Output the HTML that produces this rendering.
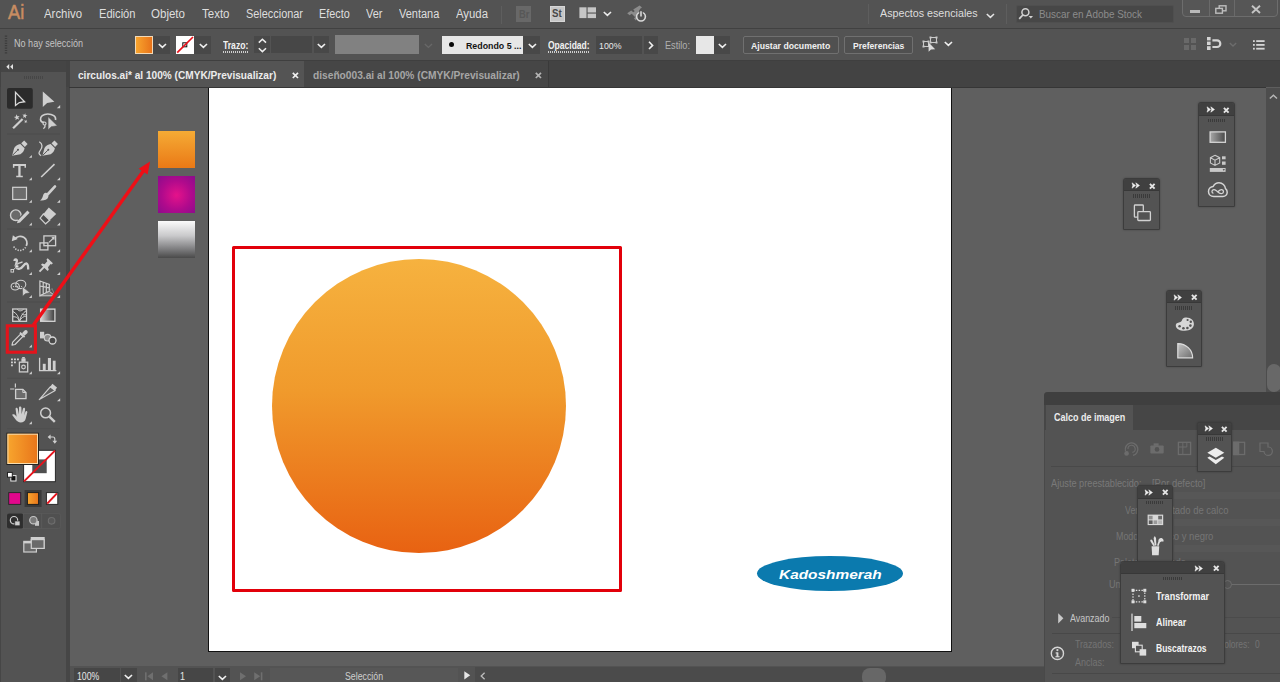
<!DOCTYPE html>
<html>
<head>
<meta charset="utf-8">
<title>circulos.ai</title>
<style>
*{box-sizing:border-box;margin:0;padding:0}
html,body{width:1280px;height:682px;overflow:hidden;background:#5e5e5e;font-family:"Liberation Sans",sans-serif;}
#app{position:relative;width:1280px;height:682px;overflow:hidden;background:#5e5e5e}
.a{position:absolute}
.t{position:absolute;white-space:nowrap;line-height:1;color:#dcdcdc;transform-origin:0 50%}
svg{position:absolute;overflow:visible}
.mp{position:absolute;background:#535353;border:1px solid #3c3c3c;border-radius:3px 3px 1px 1px;box-shadow:0 0 2px rgba(0,0,0,.3)}
.mph{position:absolute;left:0;top:0;right:0;background:#404040;border-radius:2px 2px 0 0;border-bottom:1px solid #383838}
.grip{position:absolute;height:3.2px;background:repeating-linear-gradient(90deg,#3a3a3a 0 1px,transparent 1px 2px)}
/* bars */
#menubar{left:0;top:0;width:1280px;height:28px;background:#535353}
#menuline{left:0;top:28px;width:1280px;height:1px;background:#414141}
#ctrlbar{left:0;top:29px;width:1280px;height:31px;background:#535353}
#ctrlline{left:0;top:60px;width:1280px;height:1px;background:#3f3f3f}
#tabstrip{left:0;top:61px;width:1280px;height:26px;background:#434343}
#tabline{left:69px;top:87px;width:1197px;height:1px;background:#363636}
#tab1{left:70px;top:61px;width:234px;height:26px;background:#545454}
#tab2{left:304px;top:61px;width:245px;height:26px;background:#464646;border-right:1px solid #3a3a3a}
/* left */
#leftcol{left:0;top:61px;width:70px;height:621px;background:#464646}
#toolhead{left:1px;top:61px;width:65.3px;height:11px;background:#454545}
#toolbody{left:1px;top:72px;width:65.3px;height:610px;background:#535353}
/* canvas */
#canvas{left:70px;top:88px;width:1196px;height:578px;background:#5f5f5f}
#artboard{left:208px;top:87px;width:744px;height:565px;background:#fff;border:1px solid #111}
#vscroll{left:1265.5px;top:88px;width:14.5px;height:578px;background:#4d4d4d}
#status{left:70px;top:666px;width:1210px;height:16px;background:#535353}
</style>
</head>
<body>
<div id="app">
  <!-- canvas area -->
  <div class="a" id="canvas"></div>
  <div class="a" id="artboard"></div>

  <!-- artwork -->
  <div class="a" style="left:158px;top:131px;width:37px;height:37px;background:linear-gradient(#f5ab35,#ea7916)"></div>
  <div class="a" style="left:158px;top:176px;width:37px;height:37px;background:radial-gradient(circle at 50% 52%,#e5128a 0%,#b00a8c 55%,#8a0c8c 100%)"></div>
  <div class="a" style="left:158px;top:221px;width:37px;height:37px;background:linear-gradient(#fbfbfb 0%,#c9c9cb 40%,#7f7f81 75%,#4a4a4a 100%)"></div>
  <div class="a" style="left:271.9px;top:259px;width:293.8px;height:293.8px;border-radius:50%;background:linear-gradient(#f6b23f 0%,#f09a2c 45%,#e86212 100%)"></div>
  <div class="a" style="left:232.3px;top:245.8px;width:389.8px;height:346.1px;border:3px solid #e2000a;border-radius:1.5px"></div>
  <svg class="a" style="left:757px;top:556.1px" width="146" height="35" viewBox="0 0 146 35"><ellipse cx="73" cy="17.5" rx="73" ry="17.5" fill="#0b7aae"/></svg>

  <!-- bars -->
  <div class="a" id="status"></div>
  <div class="a" id="vscroll"></div>
  <div class="a" id="leftcol"></div>
  <div class="a" id="menubar"></div>
  <div class="a" id="menuline"></div>
  <div class="a" id="ctrlbar"></div>
  <div class="a" id="ctrlline"></div>
  <div class="a" id="tabstrip"></div>
  <div class="a" id="tabline"></div>
  <div class="a" id="tab2"></div>
  <div class="a" id="tab1"></div>
  <div class="a" id="toolhead"></div>
  <div class="a" id="toolbody"></div>


  <!-- ===== menu bar widgets ===== -->
  <div class="t" style="left:7.6px;top:3.4px;font-size:19.6px;color:#c98d62;transform:scaleX(.93);-webkit-text-stroke:.5px #c98d62">Ai</div>
  <div class="a" style="left:500.5px;top:6px;width:1px;height:18px;background:#5e5e5e"></div>
  <div class="a" style="left:516px;top:6px;width:15px;height:16px;background:#686868"></div>
  <div class="t" style="left:519px;top:8.5px;font-size:11px;font-weight:bold;color:#575757;transform:scaleX(.85)">Br</div>
  <div class="a" style="left:549.5px;top:6px;width:15.5px;height:16px;background:#c6c6c6;border:1px solid #d6d6d6"></div>
  <div class="t" style="left:552.3px;top:8.3px;font-size:11.5px;font-weight:bold;color:#484848;transform:scaleX(.84)">St</div>
  <svg style="left:579px;top:7px" width="18" height="12" viewBox="0 0 18 12"><rect x=".4" y=".3" width="7.1" height="10.8" fill="#c6c6c6"/><rect x="8.6" y=".3" width="8.4" height="5.2" fill="#c6c6c6"/><rect x="8.6" y="6.6" width="8.4" height="4.5" fill="#c6c6c6"/></svg>
  <svg style="left:603px;top:10.5px" width="9" height="6" viewBox="0 0 9 6"><path d="M.8 1 L4.4 4.4 L8 1" fill="none" stroke="#ececec" stroke-width="1.6"/></svg>
  <!-- rocket / gpu icon -->
  <svg style="left:625px;top:4px" width="24" height="20" viewBox="0 0 24 20">
    <path d="M2.2 9.2 L6.2 6.4 L8.6 8.4 L4.6 11.2 Z M8.2 5.6 L14.6 1.6 L17 3.6 L10.6 8 Z M9 14.6 L11 12.2 L12.8 13.4 L10.8 16.6 Z" fill="#8c8c8c"/>
    <path d="M6.5 9.5 L15.5 3 L13.5 9.5 L10 13 Z" fill="#8c8c8c"/>
    <circle cx="16" cy="12.6" r="4.4" fill="#535353" stroke="#d9d9d9" stroke-width="1.6"/>
    <rect x="14.2" y="6" width="3.6" height="5" fill="#535353"/>
    <line x1="16" y1="7.2" x2="16" y2="12.4" stroke="#d9d9d9" stroke-width="1.6"/>
  </svg>
  <div class="a" style="left:868px;top:4px;width:1px;height:20px;background:#5e5e5e"></div>
  <svg style="left:985.5px;top:12.5px" width="9" height="6" viewBox="0 0 9 6"><path d="M.8 1 L4.4 4.4 L8 1" fill="none" stroke="#e4e4e4" stroke-width="1.5"/></svg>
  <div class="a" style="left:1006px;top:4px;width:1px;height:20px;background:#5e5e5e"></div>
  <div class="a" style="left:1016px;top:5px;width:157.5px;height:18px;background:#474747;border:1px solid #4f4f4f;border-radius:2px"></div>
  <svg style="left:1018px;top:7px" width="16" height="14" viewBox="0 0 16 14"><circle cx="7.4" cy="5.2" r="3.5" fill="none" stroke="#d2d2d2" stroke-width="1.5"/><line x1="4.8" y1="8" x2="1.2" y2="11.8" stroke="#d2d2d2" stroke-width="1.8"/><path d="M10.6 9 L15 9 L12.8 11.4 Z" fill="#d2d2d2"/></svg>
  <!-- window controls -->
  <div class="a" style="left:1182px;top:-2px;width:95.5px;height:18.5px;background:#565656;border:1px solid #6d6d6d;border-radius:0 0 4px 4px"></div>
  <div class="a" style="left:1208.5px;top:0;width:1px;height:16px;background:#6a6a6a"></div>
  <div class="a" style="left:1233.5px;top:0;width:1px;height:16px;background:#6a6a6a"></div>
  <div class="a" style="left:1190px;top:10px;width:10px;height:3px;background:#b9b9b9"></div>
  <svg style="left:1215px;top:4.5px" width="12" height="9" viewBox="0 0 12 9"><rect x="4.2" y=".8" width="6.8" height="5" fill="none" stroke="#bdbdbd" stroke-width="1.4"/><rect x=".8" y="3.4" width="6.6" height="4.8" fill="#565656" stroke="#bdbdbd" stroke-width="1.4"/></svg>
  <svg style="left:1251px;top:4.5px" width="10" height="9" viewBox="0 0 10 9"><path d="M1 .8 L9 8 M9 .8 L1 8" stroke="#c4c4c4" stroke-width="1.9"/></svg>

  <!-- ===== control bar widgets ===== -->
  <svg style="left:4px;top:35px" width="4" height="20" viewBox="0 0 4 20"><path d="M2 .5 V19.5" stroke="#3d3d3d" stroke-width="2.4" stroke-dasharray="1.2 1.2"/></svg>
  <div class="a" style="left:135px;top:36px;width:18px;height:17.5px;background:linear-gradient(90deg,#f8a42d,#e8731a);border:1px solid #f3d9b6"></div>
  <div class="a" style="left:153px;top:36px;width:17px;height:17.5px;background:#484848"></div>
  <svg class="chev" style="left:158px;top:43px" width="9" height="6" viewBox="0 0 9 6"><path d="M.8 1 L4.4 4.4 L8 1" fill="none" stroke="#efefef" stroke-width="1.6"/></svg>
  <div class="a" style="left:176.3px;top:36px;width:18px;height:17.5px;background:#fff"></div>
  <svg style="left:176.3px;top:36px" width="18" height="17.5" viewBox="0 0 18 17.5"><rect x="6.8" y="6.8" width="4" height="4" fill="none" stroke="#111" stroke-width="1"/><line x1="1.2" y1="16.6" x2="17" y2="1" stroke="#e8121c" stroke-width="1.7"/></svg>
  <div class="a" style="left:194.3px;top:36px;width:17px;height:17.5px;background:#484848"></div>
  <svg style="left:199px;top:43px" width="9" height="6" viewBox="0 0 9 6"><path d="M.8 1 L4.4 4.4 L8 1" fill="none" stroke="#efefef" stroke-width="1.6"/></svg>
  <div class="a" style="left:223px;top:51px;width:26px;height:1.5px;background:repeating-linear-gradient(90deg,#cfcfcf 0 1px,transparent 1px 2px)"></div>
  <div class="a" style="left:254px;top:36px;width:15.5px;height:17px;background:#484848"></div>
  <svg style="left:258px;top:37.5px" width="9" height="15" viewBox="0 0 9 15"><path d="M.8 4.6 L4.4 1.2 L8 4.6 M.8 10.2 L4.4 13.6 L8 10.2" fill="none" stroke="#efefef" stroke-width="1.5"/></svg>
  <div class="a" style="left:271px;top:36px;width:41px;height:17px;background:#474747"></div>
  <div class="a" style="left:314px;top:36px;width:15px;height:17px;background:#484848"></div>
  <svg style="left:316.5px;top:42.5px" width="9" height="6" viewBox="0 0 9 6"><path d="M.8 1 L4.4 4.4 L8 1" fill="none" stroke="#efefef" stroke-width="1.6"/></svg>
  <div class="a" style="left:334.7px;top:35px;width:84.5px;height:19.3px;background:#818181"></div>
  <svg style="left:423.5px;top:43px" width="9" height="6" viewBox="0 0 9 6"><path d="M.8 1 L4.4 4.4 L8 1" fill="none" stroke="#686868" stroke-width="1.4"/></svg>
  <div class="a" style="left:442.3px;top:35.5px;width:81px;height:18.3px;background:#e7e7e7"></div>
  <div class="a" style="left:449px;top:42px;width:5.2px;height:5.2px;border-radius:50%;background:#0a0a0a"></div>
  <div class="a" style="left:523.3px;top:35.5px;width:16.5px;height:18.3px;background:#484848"></div>
  <svg style="left:527.5px;top:42.5px" width="9" height="6" viewBox="0 0 9 6"><path d="M.8 1 L4.4 4.4 L8 1" fill="none" stroke="#efefef" stroke-width="1.6"/></svg>
  <div class="a" style="left:548px;top:51px;width:42px;height:1.5px;background:repeating-linear-gradient(90deg,#cfcfcf 0 1px,transparent 1px 2px)"></div>
  <div class="a" style="left:595.5px;top:36px;width:46.5px;height:17.5px;background:#474747"></div>
  <div class="a" style="left:643.8px;top:36px;width:14px;height:17.5px;background:#484848"></div>
  <svg style="left:648px;top:40.5px" width="6" height="9" viewBox="0 0 6 9"><path d="M1 .8 L4.6 4.4 L1 8" fill="none" stroke="#efefef" stroke-width="1.6"/></svg>
  <div class="a" style="left:695.8px;top:35.5px;width:18px;height:18px;background:#e7e7e7"></div>
  <div class="a" style="left:713.8px;top:35.5px;width:16.7px;height:18px;background:#484848"></div>
  <svg style="left:718px;top:42.5px" width="9" height="6" viewBox="0 0 9 6"><path d="M.8 1 L4.4 4.4 L8 1" fill="none" stroke="#efefef" stroke-width="1.6"/></svg>
  <div class="a" style="left:743px;top:36.2px;width:96px;height:17.5px;border:1px solid #707070;border-radius:2px;background:#505050"></div>
  <div class="a" style="left:844.2px;top:36.2px;width:69px;height:17.5px;border:1px solid #707070;border-radius:2px;background:#505050"></div>
  <!-- select similar icon -->
  <svg style="left:922px;top:36px" width="17" height="17" viewBox="0 0 17 17">
    <g fill="none" stroke="#c9c9c9" stroke-width="1"><rect x="8.5" y="1.5" width="6" height="5"/><rect x="1.5" y="5.5" width="5" height="5"/></g>
    <g fill="#c9c9c9"><rect x="7.5" y=".5" width="2" height="2"/><rect x="13.5" y=".5" width="2" height="2"/><rect x="7.5" y="5.5" width="2" height="2"/><rect x="13.5" y="5.5" width="2" height="2"/><rect x=".5" y="4.5" width="2" height="2"/><rect x="5.500" y="4.5" width="2" height="2"/><rect x=".5" y="9.5" width="2" height="2"/></g>
    <path d="M6.6 6.4 L6.6 15.8 L9 13.4 L13.2 13.2 Z" fill="#dcdcdc"/>
  </svg>
  <svg style="left:944px;top:40.8px" width="9" height="6" viewBox="0 0 9 6"><path d="M.8 1 L4.4 4.4 L8 1" fill="none" stroke="#efefef" stroke-width="1.6"/></svg>
  <!-- right icons -->
  <svg style="left:1183.5px;top:38px" width="12" height="12" viewBox="0 0 12 12"><g fill="#696969"><rect x="0" y="0" width="5" height="5"/><rect x="7" y="0" width="5" height="5"/><rect x="0" y="7" width="5" height="5"/><rect x="7" y="7" width="5" height="5"/></g></svg>
  <svg style="left:1207px;top:37px" width="16" height="14" viewBox="0 0 16 14"><g fill="#d4d4d4"><rect x="0" y="0" width="3.6" height="3.4"/><rect x="0" y="4.6" width="3.6" height="3.4"/><rect x="0" y="9.2" width="3.6" height="3.8"/></g><path d="M5.4 3.4 H10 A3.3 3.3 0 0 1 10 10 H5.4" fill="none" stroke="#d4d4d4" stroke-width="2.2"/></svg>
  <svg style="left:1228.5px;top:41.5px" width="8" height="6" viewBox="0 0 8 6"><path d="M.8 1 L4 4 L7.2 1" fill="none" stroke="#6d6d6d" stroke-width="1.3"/></svg>
  <svg style="left:1253px;top:39.5px" width="12" height="10" viewBox="0 0 12 10"><g fill="#d4d4d4"><rect x="0" y=".2" width="1.8" height="1.8"/><rect x="3.2" y=".2" width="8.4" height="1.8"/><rect x="0" y="4" width="1.8" height="1.8"/><rect x="3.2" y="4" width="8.4" height="1.8"/><rect x="0" y="7.8" width="1.8" height="1.8"/><rect x="3.2" y="7.800" width="8.4" height="1.8"/></g></svg>

  <!-- ===== tabs ===== -->
  <svg style="left:291.5px;top:71.5px" width="7" height="7" viewBox="0 0 7 7"><path d="M.8 .8 L6 6 M6 .8 L.8 6" stroke="#efefef" stroke-width="1.7"/></svg>
  <svg style="left:535px;top:71.5px" width="7" height="7" viewBox="0 0 7 7"><path d="M.8 .8 L6 6 M6 .8 L.8 6" stroke="#b4b4b4" stroke-width="1.7"/></svg>
  <!-- toolbar head chevrons -->
  <svg style="left:5.5px;top:63.5px" width="8" height="6" viewBox="0 0 8 6"><path d="M3.2 0 L3.2 5.4 L.3 2.7 Z M7 0 L7 5.400 L4.1 2.7 Z" fill="#e2e2e2"/></svg>
  <div class="a" style="left:24px;top:76px;width:19px;height:3px;background:repeating-linear-gradient(90deg,#464646 0 1px,transparent 1px 2px)"></div>

  <!-- ===== status bar ===== -->
  <div class="a" style="left:73.7px;top:668px;width:46.5px;height:14px;background:#464646"></div>
  <div class="a" style="left:121.3px;top:668px;width:15.6px;height:14px;background:#464646"></div>
  <svg style="left:123.6px;top:674.3px" width="9" height="6" viewBox="0 0 9 6"><path d="M.8 1 L4.4 4.4 L8 1" fill="none" stroke="#efefef" stroke-width="1.6"/></svg>
  <svg style="left:145px;top:671.5px" width="24" height="9" viewBox="0 0 24 9"><g fill="#6f6f6f"><rect x="0" y=".3" width="1.6" height="8"/><path d="M8 .3 V8.3 L2.4 4.3 Z"/><path d="M22.400 .3 V8.3 L16.4 4.3 Z"/></g></svg>
  <div class="a" style="left:177.5px;top:668px;width:35.8px;height:14px;background:#464646"></div>
  <div class="a" style="left:215px;top:668px;width:15px;height:14px;background:#464646"></div>
  <svg style="left:217.5px;top:674.5px" width="9" height="6" viewBox="0 0 9 6"><path d="M.8 1 L4.4 4.4 L8 1" fill="none" stroke="#efefef" stroke-width="1.6"/></svg>
  <svg style="left:239.5px;top:671.5px" width="24" height="9" viewBox="0 0 24 9"><g fill="#6f6f6f"><path d="M0 .3 V8.3 L6 4.3 Z"/><path d="M14.2 .3 V8.3 L20.2 4.3 Z"/><rect x="20.8" y=".3" width="1.600" height="8"/></g></svg>
  <div class="a" style="left:270px;top:668px;width:188px;height:14px;background:#575757"></div>
  <svg style="left:463.5px;top:671px" width="7" height="9" viewBox="0 0 7 9"><path d="M.3 .2 V8.4 L6.2 4.3 Z" fill="#e6e6e6"/></svg>
  <div class="a" style="left:475px;top:666.6px;width:570px;height:16px;background:#4b4b4b"></div>
  <svg style="left:480px;top:671.5px" width="6" height="8" viewBox="0 0 6 8"><path d="M4.6 .8 L1.2 4 L4.600 7.2" fill="none" stroke="#bdbdbd" stroke-width="1.3"/></svg>
  <div class="a" style="left:862px;top:667.6px;width:23.5px;height:18px;border-radius:8px;background:#676767"></div>
  <!-- vscroll bits -->
  <svg style="left:1269px;top:94px" width="9" height="6" viewBox="0 0 9 6"><path d="M.8 4.600 L4.4 1.2 L8 4.6" fill="none" stroke="#b8b8b8" stroke-width="1.4"/></svg>

  <!-- ===== toolbar icons (page coords) ===== -->
  <svg style="left:0;top:0" width="70" height="682" viewBox="0 0 70 682">
    <defs>
      <linearGradient id="gOr" x1="0" x2="1" y1="0" y2="0"><stop offset="0" stop-color="#f8a62e"/><stop offset="1" stop-color="#e8741a"/></linearGradient>
      <linearGradient id="gGr" x1="0" x2="1" y1="0" y2="0"><stop offset="0" stop-color="#d8d8d8"/><stop offset="1" stop-color="#3c3c3c"/></linearGradient>
    </defs>
    <g fill="#cfcfcf" stroke="none">
      <!-- separators -->
      <g fill="#4d4d4d"><rect x="7" y="133.5" width="53" height="1"/><rect x="7" y="228.500" width="53" height="1"/><rect x="7" y="301.5" width="53" height="1"/><rect x="7" y="377.7" width="53" height="1"/><rect x="7" y="428.2" width="53" height="1" fill="#4f4f4f"/></g>
      <!-- selected tool bg -->
      <rect x="7" y="88" width="25.8" height="20.8" rx="2" fill="#2b2b2b"/>
      <path d="M15.500 92.300 V105.400 L19.300 102.500 L24.600 101.700 Z" fill="none" stroke="#dadada" stroke-width="1.300" stroke-linejoin="miter"/>
      <!-- direct select -->
      <path d="M42.8 91.4 V107 L47.1 102.900 L54.4 101.800 Z"/>
      <path d="M60.200 104.9 V108.3 H56.8 Z"/>
      <!-- magic wand -->
      <path d="M13.100 128.300 L22.600 119" stroke="#cfcfcf" stroke-width="2.200" fill="none"/>
      <path d="M16.36 114.35 L17.47 116.23 L19.64 115.94 L18.19 117.58 L19.13 119.55 L17.13 118.68 L15.54 120.19 L15.75 118.01 L13.83 116.97 L15.96 116.50Z M25.27 113.14 L25.59 115.04 L27.47 115.42 L25.77 116.32 L25.98 118.23 L24.61 116.88 L22.86 117.68 L23.71 115.95 L22.42 114.53 L24.32 114.81Z M26.70 119.67 L26.47 121.19 L27.43 122.40 L25.91 122.17 L24.70 123.13 L24.93 121.61 L23.97 120.40 L25.49 120.63Z"/>
      <!-- lasso + arrow -->
      <path d="M55.500 120 C56.300 116.600 52.600 114 47.800 114 C43.200 114 40.100 116.600 40.500 119.600 C40.800 121.600 42.400 122.500 44.200 122.300" fill="none" stroke="#cfcfcf" stroke-width="1.600"/>
      <circle cx="44.500" cy="123.500" r="1.500" fill="none" stroke="#cfcfcf" stroke-width="1.200"/>
      <path d="M44.900 125 C45.300 126.800 44.600 128 43.300 128.600" fill="none" stroke="#cfcfcf" stroke-width="1.300"/>
      <path d="M48.100 116.800 V129.800 L51.200 126.700 L57.300 125.700 Z" stroke="#535353" stroke-width=".5"/>
      <!-- pen -->
      <g id="pen">
        <path d="M12.100 155.700 L14.200 148 C15.500 145.800 18 144.200 20.300 143.900 L24.600 148.300 C24.200 150.800 22.600 153 20.400 154.200 Z"/>
        <path d="M21.200 143.200 L24.200 140.500 L27.600 144.100 L24.800 147 Z"/>
        <path d="M12.600 155.200 L17.600 150.200" stroke="#535353" stroke-width="1" fill="none"/>
        <circle cx="18" cy="149.800" r="1" fill="#535353"/>
      </g>
      <path d="M31.900 154.900 V157.800 H29 Z"/>
      <!-- curvature pen -->
      <g transform="translate(30.300 0)">
        <path d="M12.100 155.700 L14.200 148 C15.500 145.800 18 144.200 20.300 143.900 L24.600 148.300 C24.200 150.800 22.600 153 20.400 154.200 Z"/>
        <path d="M21.200 143.200 L24.200 140.500 L27.600 144.100 L24.800 147 Z"/>
        <path d="M12.600 155.200 L17.600 150.200" stroke="#535353" stroke-width="1" fill="none"/>
        <circle cx="18" cy="149.800" r="1" fill="#535353"/>
      </g>
      <path d="M39.300 141.700 C42.800 143.800 42.600 147.600 40.300 150.300 C38.300 152.600 38.600 154.600 41.200 155.600" fill="none" stroke="#cfcfcf" stroke-width="1.300"/>
      <!-- type -->
      <path d="M12.900 164 H26 V167.800 H24.500 V165.900 H20.600 V175.800 H22.800 V177.300 H16.200 V175.800 H18.300 V165.900 H14.400 V167.800 H12.900 Z"/>
      <path d="M31.900 177.200 V180.200 H29 Z"/>
      <!-- line -->
      <path d="M41.200 177 L54.500 164.200" stroke="#cfcfcf" stroke-width="1.600" fill="none"/>
      <path d="M60.100 177.200 V180.200 H57 Z"/>
      <!-- rectangle -->
      <rect x="12.700" y="187.300" width="13.800" height="12.200" fill="#6c6c6c" stroke="#d2d2d2" stroke-width="1.200"/>
      <path d="M31.900 199.800 V202.800 H29 Z"/>
      <!-- brush -->
      <path d="M55 186.400 L48 194" stroke="#cfcfcf" stroke-width="2.600" stroke-linecap="round" fill="none"/>
      <path d="M46.300 192.800 C48.600 193.600 49.300 196.600 47.300 198.700 C45.400 200.600 42.300 200.400 40 200.500 C41.900 199 42.500 197.600 43 195.700 C43.500 193.700 44.800 192.300 46.300 192.800 Z"/>
      <path d="M60.100 199.800 V202.800 H57 Z"/>
      <!-- shaper -->
      <circle cx="15.800" cy="215.200" r="5.300" fill="#6a6a6a" stroke="#cfcfcf" stroke-width="1.400"/>
      <path d="M19.300 221 L28.300 211.800" stroke="#535353" stroke-width="5" fill="none"/>
      <path d="M17 223.300 L17.800 220.400 L27.400 210.600 L29.600 212.800 L20 222.500 Z"/>
      <path d="M31.900 222.500 V225.500 H29 Z"/>
      <!-- eraser -->
      <path d="M48.800 207.500 L56.200 214.100 L49.700 220.200 L43.400 214 Z"/>
      <path d="M43.400 214 L49.700 220.200 L45.600 223.800 L40.100 218.100 Z" fill="#4c4c4c" stroke="#cfcfcf" stroke-width="1.200"/>
      <path d="M60.100 222.500 V225.500 H57 Z"/>
      <!-- rotate -->
      <path d="M14.800 239.200 A6.700 6.700 0 0 1 26.300 246" fill="none" stroke="#cfcfcf" stroke-width="1.700"/>
      <path d="M11.800 241.300 L12.900 235.300 L17.800 238.900 Z"/>
      <path d="M25.600 247.300 A6.700 6.700 0 0 1 13.500 245.800" fill="none" stroke="#cfcfcf" stroke-width="1.600" stroke-dasharray="1.300 1.300"/>
      <path d="M31.900 249.200 V252.200 H29 Z"/>
      <!-- scale -->
      <rect x="43.900" y="235.900" width="11.700" height="9.800" fill="none" stroke="#cfcfcf" stroke-width="1.300"/>
      <rect x="40" y="242.900" width="7.900" height="7" fill="none" stroke="#cfcfcf" stroke-width="1.300"/>
      <path d="M49 242.400 L53.600 238" stroke="#cfcfcf" stroke-width="1.200" fill="none"/>
      <path d="M54.800 236.700 L54.300 240.200 L51.400 237.300 Z"/>
      <path d="M60.100 249.200 V252.200 H57 Z"/>
      <!-- width tool -->
      <path d="M14.500 261 C14.500 258.500 17.500 258.800 16.800 261.500 C16 264.500 14.500 267.800 18.500 268.800 C22.500 269.800 23.500 263 26.500 263.500 C28.500 264 28 267 28.200 269.500" fill="none" stroke="#cfcfcf" stroke-width="2.300"/>
      <path d="M15 266 C17 264 20 262.500 22.500 262" fill="none" stroke="#cfcfcf" stroke-width="1.300"/>
      <circle cx="16.900" cy="266.300" r="1.500" fill="#e6e6e6" stroke="#8a8a8a" stroke-width=".6"/>
      <path d="M12.300 270.800 L15.500 267.800" stroke="#cfcfcf" stroke-width="1" fill="none"/>
      <rect x="11" y="269.500" width="2.600" height="2.600" fill="#535353" stroke="#d6d6d6" stroke-width=".9"/>
      <path d="M31.900 272 V275 H29 Z"/>
      <!-- pin -->
      <path d="M39.500 271.700 L44.600 266.400" stroke="#cfcfcf" stroke-width="1.900" fill="none"/>
      <path d="M47.700 258.300 L52.900 263.200 L51.600 264.600 L50.600 264.100 L48 267.200 L48.800 269.800 L47.600 271 L41 264.800 L42.200 263.600 L44.600 264.200 L47.300 261.200 L46.500 259.600 Z"/>
      <path d="M60.100 272 V275 H57 Z"/>
      <!-- shape builder -->
      <ellipse cx="15.200" cy="286.500" rx="4.100" ry="3.500" fill="none" stroke="#cfcfcf" stroke-width="1.100"/>
      <ellipse cx="20.800" cy="284.400" rx="5" ry="4.200" fill="none" stroke="#cfcfcf" stroke-width="1.100"/>
      <path d="M13 286.600 H22" stroke="#cfcfcf" stroke-width="1" stroke-dasharray="1 1" fill="none"/>
      <path d="M22.300 286.600 L22.700 296.200 L25.400 293.700 L30.100 292.800 Z" stroke="#535353" stroke-width=".6"/>
      <path d="M31.900 295.100 V298.100 H29 Z"/>
      <!-- perspective grid -->
      <path d="M39.900 281 L49.300 284.400 V291.300 L39.900 295.800 Z M43.200 282.300 V294.200 M46.300 283.400 V292.800 M39.900 286 L49.300 287.800" fill="none" stroke="#cfcfcf" stroke-width="1.200"/>
      <path d="M39.900 295.800 L49.300 291.300 L55 295.800 Z" fill="#7a7a7a" stroke="#cfcfcf" stroke-width="1"/>
      <path d="M49.300 291.300 L52 288.500 L55 295.800" fill="none" stroke="#8f8f8f" stroke-width=".8"/>
      <path d="M60.100 295.100 V298.100 H57 Z"/>
      <!-- mesh -->
      <rect x="12.700" y="309" width="13.800" height="12.300" fill="#454545" stroke="#cfcfcf" stroke-width="1.300"/>
      <path d="M19.200 321.300 C18.800 317 17 313.500 13 311.500 M19.600 321.300 C20.400 316.500 22.600 313 26.300 310.600 M13 316.800 C16 316.400 18 317.800 19.300 320.600 M26.300 316 C23.400 316.400 21.200 318 19.800 320.600 M17.200 309.200 C18.800 311.200 21 311.600 23.600 309.300 M21.800 313.800 C23.200 315.200 24.800 315.400 26.300 314" fill="none" stroke="#cfcfcf" stroke-width="1"/>
      <!-- gradient -->
      <rect x="40.600" y="309.100" width="14.300" height="12.200" fill="url(#gGr)" stroke="#d6d6d6" stroke-width="1.300"/>
      <!-- eyedropper -->
      <path d="M12 345.200 L12.700 342.200 L20.600 334.100 L23 336.400 L15 344.500 Z" fill="none" stroke="#d2d2d2" stroke-width="1.200" stroke-linejoin="round"/>
      <path d="M19.300 333.200 L20.600 332 L25.200 336.500 L24 337.800 Z"/>
      <path d="M22 333.300 L24.300 330.700 C25.300 329.700 26.800 329.900 27.400 330.900 C28 331.900 27.600 333 26.700 333.800 L24.400 335.800 Z"/>
      <path d="M31.900 344.400 V347.400 H29 Z"/>
      <!-- blend -->
      <rect x="40" y="331.800" width="4.200" height="6.600"/>
      <circle cx="47.600" cy="337.700" r="3.300" fill="#8c8c8c" stroke="#cfcfcf" stroke-width="1.100"/>
      <circle cx="52.500" cy="340.500" r="3.500" fill="#484848" stroke="#d6d6d6" stroke-width="1.300"/>
      <!-- symbol sprayer -->
      <rect x="19.400" y="362.200" width="8.300" height="9.700" fill="#535353" stroke="#cfcfcf" stroke-width="1.300"/>
      <circle cx="23.500" cy="367" r="1.800" fill="none" stroke="#cfcfcf" stroke-width="1.200"/>
      <rect x="21.400" y="358.400" width="4.200" height="3.400"/>
      <rect x="22.200" y="357" width="2.600" height="1.600"/>
      <path d="M11 358.400 h1.900 v1.900 h-1.900z M14 358.400 h1.900 v1.900 h-1.900z M17 358.400 h1.900 v1.900 h-1.900z M11 361.400 h1.900 v1.900 h-1.900z M14 361.400 h1.900 v1.900 h-1.900z M11 364.400 h1.900 v1.900 h-1.900z"/>
      <path d="M31.900 371.200 V374.200 H29 Z"/>
      <!-- graph -->
      <path d="M39.600 357.800 V370.700 H56.400" fill="none" stroke="#cfcfcf" stroke-width="1.300"/>
      <rect x="42.800" y="363.800" width="2.900" height="6.400"/><rect x="47.900" y="358" width="3.100" height="12.200"/><rect x="52.800" y="360.700" width="2.800" height="9.500"/>
      <path d="M60.100 371.200 V374.200 H57 Z"/>
      <!-- artboard -->
      <path d="M15.400 383.400 V387.600 M10.100 389 H14.300" stroke="#cfcfcf" stroke-width="1.200" fill="none"/>
      <path d="M15.600 389.300 H22.800 L26 392.500 V398.600 H15.600 Z" fill="#6c6c6c" stroke="#cfcfcf" stroke-width="1.300"/>
      <path d="M22.800 389.300 V392.500 H26" fill="none" stroke="#cfcfcf" stroke-width="1"/>
      <!-- slice -->
      <path d="M39.300 399.600 L50.300 386.800 L55.200 390.600 Z" fill="#5c5c5c" stroke="#cfcfcf" stroke-width="1.200" stroke-linejoin="round"/>
      <path d="M50 387 L52.400 383.800 L57 387.600 L55 390.800 Z"/>
      <path d="M60.200 398.200 V401.200 H57 Z"/>
      <!-- hand -->
      <path d="M12 414.800 C13 413.800 14.600 414.200 15.600 415.600 L16.600 416.800 L15.600 409.300 C15.400 407.600 17.400 407.300 17.800 408.900 L19 414.400 L19 407.800 C19 406.100 21.300 406.100 21.400 407.800 L21.600 414.300 L22.900 408.800 C23.300 407.200 25.300 407.600 25.100 409.300 L24.300 415.200 L25.400 411.800 C25.900 410.400 27.600 411 27.300 412.400 L25.600 419 C25 421.300 23.300 422.400 20.800 422.400 C18.400 422.400 17 421.500 15.600 419.600 Z"/>
      <path d="M31.900 421.200 V424.200 H29 Z"/>
      <!-- zoom -->
      <circle cx="45.600" cy="412.900" r="4.900" fill="none" stroke="#cfcfcf" stroke-width="1.500"/>
      <path d="M49.400 416.700 L54.800 421.800" stroke="#cfcfcf" stroke-width="2.400" fill="none"/>
    </g>
    <!-- fill / stroke -->
    <rect x="23.600" y="450.300" width="31.800" height="31.400" fill="#fff" stroke="#2a2a2a" stroke-width="1"/>
    <rect x="32.300" y="459.400" width="14.400" height="13.800" fill="#4f4f4f"/>
    <path d="M24 481.400 L55 450.600" stroke="#e6131c" stroke-width="2" fill="none"/>
    <rect x="6.900" y="433.200" width="31.600" height="31.300" fill="url(#gOr)" stroke="#222" stroke-width="1"/>
    <rect x="7.900" y="434.200" width="29.600" height="29.300" fill="none" stroke="#f8dcae" stroke-width="1"/>
    <!-- swap -->
    <path d="M50 437 H53 Q54.800 437 54.800 439 V441.500" fill="none" stroke="#cfcfcf" stroke-width="1.200"/>
    <path d="M47.600 437 L50.600 434.600 V439.400 Z M54.800 443.800 L52.400 440.800 H57.200 Z" fill="#cfcfcf"/>
    <!-- default fill/stroke -->
    <rect x="10.800" y="475.600" width="5.200" height="5.400" fill="#111" stroke="#ededed" stroke-width="1"/>
    <rect x="7.500" y="472.400" width="4.800" height="4.800" fill="#fff" stroke="#222" stroke-width="1"/>
    <!-- colour mode buttons -->
    <rect x="24.600" y="490" width="17" height="17" fill="#3a3a3a"/>
    <rect x="8.700" y="492.600" width="12" height="11.800" fill="#e2078c" stroke="#2a2a2a" stroke-width="1"/>
    <rect x="27.400" y="492.600" width="11.200" height="11.800" fill="url(#gOr)" stroke="#1e1e1e" stroke-width="1"/>
    <rect x="46.400" y="492.600" width="11.400" height="11.800" fill="#fff" stroke="#2a2a2a" stroke-width="1"/>
    <path d="M47.200 503.600 L57 493.400" stroke="#e6131c" stroke-width="2" fill="none"/>
    <!-- draw modes -->
    <rect x="7" y="513.400" width="53.400" height="15.200" rx="2" fill="#505050" stroke="#5a5a5a" stroke-width=".8"/>
    <rect x="7" y="513.400" width="16.400" height="15.200" rx="2" fill="#2e2e2e"/>
    <path d="M23.400 513.400 V528.600 M41.600 513.400 V528.600" stroke="#5c5c5c" stroke-width=".8"/>
    <circle cx="14" cy="520.200" r="3.700" fill="#2e2e2e" stroke="#d0d0d0" stroke-width="1.200"/>
    <rect x="14.800" y="521" width="5.200" height="4.800" fill="#d0d0d0" stroke="#2e2e2e" stroke-width=".7"/>
    <rect x="35" y="521" width="4" height="4.800" fill="#c6c6c6"/>
    <circle cx="33.400" cy="520.200" r="3.700" fill="#7a7a7a" stroke="#c6c6c6" stroke-width="1.200"/>
    <circle cx="51.600" cy="520.800" r="3.300" fill="#585858" stroke="#6e6e6e" stroke-width="1.100"/>
    <!-- screen mode -->
    <rect x="31.300" y="537.600" width="12.800" height="10.800" fill="#6a6a6a" stroke="#cfcfcf" stroke-width="1.200"/>
    <rect x="31.300" y="537.600" width="12.800" height="2" fill="#cfcfcf"/>
    <rect x="23.800" y="541.400" width="12.600" height="10.600" fill="#6a6a6a" stroke="#cfcfcf" stroke-width="1.200"/>
    <rect x="23.800" y="541.400" width="12.600" height="2" fill="#cfcfcf"/>
    <rect x="31.300" y="539.600" width="12.800" height="8.800" fill="#6a6a6a" stroke="#cfcfcf" stroke-width="1.200"/>
  </svg>

  <!-- texts -->
  <div class="t" style="left:44px;top:7.84px;font-size:12px;color:#dedede;transform:scaleX(0.9496)">Archivo</div>
  <div class="t" style="left:98.5px;top:7.84px;font-size:12px;color:#dedede;transform:scaleX(0.9274)">Edición</div>
  <div class="t" style="left:151px;top:7.84px;font-size:12px;color:#dedede;transform:scaleX(0.9616)">Objeto</div>
  <div class="t" style="left:201.5px;top:7.84px;font-size:12px;color:#dedede;transform:scaleX(0.9586)">Texto</div>
  <div class="t" style="left:245.5px;top:7.84px;font-size:12px;color:#dedede;transform:scaleX(0.9090)">Seleccionar</div>
  <div class="t" style="left:319.3px;top:7.84px;font-size:12px;color:#dedede;transform:scaleX(0.9021)">Efecto</div>
  <div class="t" style="left:365.5px;top:7.84px;font-size:12px;color:#dedede;transform:scaleX(0.9159)">Ver</div>
  <div class="t" style="left:398.7px;top:7.84px;font-size:12px;color:#dedede;transform:scaleX(0.9149)">Ventana</div>
  <div class="t" style="left:455.6px;top:7.84px;font-size:12px;color:#dedede;transform:scaleX(0.9464)">Ayuda</div>
  <div class="t" style="left:879.7px;top:7.75px;font-size:11.4px;color:#dedede;transform:scaleX(0.9399)">Aspectos esenciales</div>
  <div class="t" style="left:1038.8px;top:9.42px;font-size:11.2px;color:#8c8c8c;transform:scaleX(0.8855)">Buscar en Adobe Stock</div>
  <div class="t" style="left:14px;top:38.41px;font-size:10.5px;color:#c4c4c4;transform:scaleX(0.8628)">No hay selección</div>
  <div class="t" style="left:223px;top:40.88px;font-size:10.3px;color:#f2f2f2;transform:scaleX(0.8342);font-weight:bold">Trazo:</div>
  <div class="t" style="left:465.6px;top:41.12px;font-size:9.9px;color:#141414;transform:scaleX(0.8935);font-weight:bold">Redondo 5 ...</div>
  <div class="t" style="left:547.8px;top:40.88px;font-size:10.3px;color:#f2f2f2;transform:scaleX(0.8261);font-weight:bold">Opacidad:</div>
  <div class="t" style="left:598.8px;top:40.82px;font-size:9.9px;color:#e8e8e8;transform:scaleX(0.8905)">100%</div>
  <div class="t" style="left:665px;top:41.03px;font-size:10px;color:#b0b0b0;transform:scaleX(0.9180)">Estilo:</div>
  <div class="t" style="left:751.25px;top:41.12px;font-size:9.9px;color:#f0f0f0;transform:scaleX(0.8807);font-weight:bold">Ajustar documento</div>
  <div class="t" style="left:853px;top:41.12px;font-size:9.9px;color:#f0f0f0;transform:scaleX(0.8643);font-weight:bold">Preferencias</div>
  <div class="t" style="left:78px;top:69.89px;font-size:11px;color:#ececec;transform:scaleX(0.9186);font-weight:bold">circulos.ai* al 100% (CMYK/Previsualizar)</div>
  <div class="t" style="left:313.25px;top:69.89px;font-size:11px;color:#a6a6a6;transform:scaleX(0.9265);font-weight:bold">diseño003.ai al 100% (CMYK/Previsualizar)</div>
  <div class="t" style="left:76.7px;top:671.74px;font-size:10px;color:#e6e6e6;transform:scaleX(0.8679)">100%</div>
  <div class="t" style="left:179.5px;top:671.74px;font-size:10px;color:#e6e6e6;transform:scaleX(0.8989)">1</div>
  <div class="t" style="left:345px;top:671.74px;font-size:10px;color:#cfcfcf;transform:scaleX(0.8764)">Selección</div>
  <div class="t" style="left:778.5px;top:567.59px;font-size:13.6px;color:#ffffff;transform:scaleX(1.1334);font-weight:bold;font-style:italic">Kadoshmerah</div>
  <!-- ===== big docked panel: Calco de imagen ===== -->
  <div class="a" style="left:1267px;top:364px;width:14px;height:28px;border-radius:7px;background:#686868"></div>
  <div class="a" style="left:1044.200px;top:392.400px;width:240px;height:295px;background:#535353;border-radius:4px 0 0 0;border-left:1.600px solid #494949"></div>
  <div class="a" style="left:1044.200px;top:392.400px;width:240px;height:12.400px;background:#3f3f3f;border-radius:4px 0 0 0"></div>
  <div class="a" style="left:1044.200px;top:404.800px;width:240px;height:25.400px;background:#464646"></div>
  <div class="a" style="left:1045.500px;top:404.800px;width:87.400px;height:25.600px;background:#535353"></div>
  <!-- disabled icon row -->
  <svg style="left:1120px;top:438px" width="160" height="22" viewBox="1120 438 160 22">
    <g fill="none" stroke="#6c6c6c" stroke-width="1.300">
      <path d="M1125.500 451 A6.300 6.300 0 1 1 1133 455.400"/>
      <path d="M1128 449 A3.600 3.600 0 1 1 1132.400 452.400" stroke-width="1.100"/>
      <circle cx="1126.600" cy="453.400" r="2.300" fill="#6c6c6c" stroke="none"/>
      <rect x="1150.300" y="445.400" width="13.400" height="8" rx="1" fill="#6c6c6c" stroke="none"/>
      <rect x="1153.600" y="443.300" width="5" height="2.600" fill="#6c6c6c" stroke="none"/>
      <circle cx="1157" cy="449.400" r="2.300" fill="#535353" stroke="none"/>
      <rect x="1178.400" y="442.300" width="12.200" height="12.200"/>
      <path d="M1182.800 442.300 V454.500 M1178.400 447 H1186.800 M1186.800 442.300 V447" stroke-width="1"/>
      <rect x="1233.600" y="442.300" width="11" height="12.200"/>
      <rect x="1233.600" y="442.300" width="5" height="12.200" fill="#6c6c6c"/>
      <path d="M1260 443 H1268 V447 A4.200 4.200 0 1 1 1264 451.500 H1260 Z" stroke-width="1.200"/>
    </g>
  </svg>
  <div class="a" style="left:1051px;top:465.600px;width:229px;height:1px;background:#494949"></div>
  <!-- faint field bands -->
  <div class="a" style="left:1174px;top:492px;width:106px;height:7px;background:#575757"></div>
  <div class="a" style="left:1174px;top:518.500px;width:106px;height:7px;background:#575757"></div>
  <div class="a" style="left:1174px;top:545px;width:106px;height:7px;background:#575757"></div>
  <!-- slider -->
  <div class="a" style="left:1231px;top:584px;width:49px;height:1px;background:#6c6c6c"></div>
  <div class="a" style="left:1222.800px;top:579.800px;width:9.200px;height:9.200px;border-radius:50%;border:1.300px solid #6c6c6c;background:#535353"></div>
  <!-- avanzado -->
  <svg style="left:1057.600px;top:612.800px" width="6" height="11" viewBox="0 0 6 11"><path d="M.2 .2 V10.400 L5.400 5.300 Z" fill="#c9c9c9"/></svg>
  <div class="a" style="left:1112px;top:616.600px;width:168px;height:1px;background:#4b4b4b"></div>
  <div class="a" style="left:1051.600px;top:633px;width:229px;height:1px;background:#484848"></div>
  <div class="a" style="left:1051.600px;top:673.400px;width:229px;height:1px;background:#484848"></div>
  <svg style="left:1050.400px;top:645.600px" width="15" height="15" viewBox="0 0 15 15"><circle cx="7.400" cy="7.400" r="6.100" fill="none" stroke="#d6d6d6" stroke-width="1.400"/><rect x="6.500" y="6.400" width="1.900" height="4.600" fill="#d6d6d6"/><rect x="5.600" y="6.400" width="2" height="1.100" fill="#d6d6d6"/><rect x="5.400" y="10.200" width="4.200" height="1.100" fill="#d6d6d6"/><circle cx="7.400" cy="4.100" r="1.150" fill="#d6d6d6"/></svg>

  <div class="t" style="left:1054px;top:413.44px;font-size:10px;color:#ececec;transform:scaleX(0.8972);font-weight:bold">Calco de imagen</div>
  <div class="t" style="left:1050.7px;top:478.06px;font-size:10.8px;color:#797979;transform:scaleX(0.8518)">Ajuste preestablecido:</div>
  <div class="t" style="left:1152px;top:478.06px;font-size:10.8px;color:#777777;transform:scaleX(0.8723)">[Por defecto]</div>
  <div class="t" style="left:1125.3px;top:504.86px;font-size:10.8px;color:#757575;transform:scaleX(0.8169)">Ver:</div>
  <div class="t" style="left:1148px;top:504.86px;font-size:10.8px;color:#757575;transform:scaleX(0.8754)">Resultado de calco</div>
  <div class="t" style="left:1116.3px;top:530.86px;font-size:10.8px;color:#757575;transform:scaleX(0.8229)">Modo:</div>
  <div class="t" style="left:1149.5px;top:530.86px;font-size:10.8px;color:#757575;transform:scaleX(0.8802)">Blanco y negro</div>
  <div class="t" style="left:1114px;top:556.86px;font-size:10.8px;color:#757575;transform:scaleX(0.8327)">Paleta:</div>
  <div class="t" style="left:1150px;top:556.86px;font-size:10.8px;color:#757575;transform:scaleX(0.8821)">Limitada</div>
  <div class="t" style="left:1109.4px;top:579.26px;font-size:10.8px;color:#757575;transform:scaleX(0.8360)">Umbral:</div>
  <div class="t" style="left:1070px;top:612.71px;font-size:10.5px;color:#c6c6c6;transform:scaleX(0.8470)">Avanzado</div>
  <div class="t" style="left:1074.7px;top:639.46px;font-size:10.8px;color:#747474;transform:scaleX(0.8192)">Trazados:</div>
  <div class="t" style="left:1218px;top:639.46px;font-size:10.8px;color:#747474;transform:scaleX(0.7882)">Colores:</div>
  <div class="t" style="left:1254.7px;top:639.46px;font-size:10.8px;color:#747474;transform:scaleX(0.7813)">0</div>
  <div class="t" style="left:1074.7px;top:656.56px;font-size:10.8px;color:#747474;transform:scaleX(0.8304)">Anclas:</div>
  <!-- ===== floating mini panels ===== -->
  <!-- P1 -->
  <div class="mp" style="left:1198.300px;top:102.200px;width:36.300px;height:104.400px"><div class="mph" style="height:12.400px"></div></div>
  <svg class="dbl" style="left:1206.600px;top:107.300px" width="8" height="5" viewBox="0 0 8 5"><path d="M0 -.2 L3.600 2.500 L0 5.200 L.8 2.500 Z M3.800 -.2 L7.500 2.500 L3.800 5.200 L4.600 2.500 Z" fill="#f0f0f0" stroke="#f0f0f0" stroke-width=".5" stroke-linejoin="round"/></svg>
  <svg style="left:1223.400px;top:106.900px" width="7" height="7" viewBox="0 0 7 7"><path d="M.9 .9 L5.600 5.600 M5.600 .9 L.9 5.600" stroke="#e4e4e4" stroke-width="1.900"/></svg>
  <div class="grip" style="left:1207.600px;top:118.500px;width:18.400px"></div>
  <svg style="left:1205px;top:128px" width="26" height="72" viewBox="1205 128 26 72">
    <defs><linearGradient id="gP1" x1="0" x2="1"><stop offset="0" stop-color="#a8a8a8"/><stop offset="1" stop-color="#474747"/></linearGradient></defs>
    <rect x="1210.100" y="131.900" width="15.300" height="10.400" fill="url(#gP1)" stroke="#d4d4d4" stroke-width="1.300"/>
    <g fill="none" stroke="#c8c8c8" stroke-width="1.100"><path d="M1215 155.300 L1219.700 157.700 V163 L1215 165.400 L1210.400 163 V157.700 Z M1210.400 157.700 L1215 160.200 L1219.700 157.700 M1215 160.200 V165.400"/></g>
    <g fill="#c8c8c8"><rect x="1222" y="156.300" width="3.600" height="3"/><rect x="1222" y="161.500" width="3.600" height="3.300"/><rect x="1209.800" y="168" width="15.800" height="3.900"/></g>
    <path d="M1222.600 169.200 H1225 L1223.800 170.800 Z" fill="#3c3c3c"/>
    <g fill="none" stroke="#d4d4d4" stroke-width="1.500">
      <path d="M1213.800 196.400 C1210.600 196.400 1208.500 194.200 1208.500 191.400 C1208.500 188.700 1210.600 186.600 1213.200 186.400 C1214.400 184.200 1216.500 182.800 1219 182.800 C1222.400 182.800 1225.200 185.400 1225.500 188.700 C1226.600 189.500 1227.200 190.800 1227.200 192.200 C1227.200 194.600 1225.300 196.400 1222.900 196.400 Z"/>
      <path d="M1213.400 193.300 C1211.300 192.800 1211.500 189.900 1213.800 189.600 C1215.500 189.400 1216.500 190.700 1217.600 191.800 C1219 193.200 1220.300 194 1222 193.500 C1224 192.900 1224 190 1221.800 189.600 C1220.200 189.300 1219 190.600 1218 191.600" stroke-width="1.300"/>
    </g>
  </svg>
  <!-- P2 -->
  <div class="mp" style="left:1123.200px;top:178px;width:36.800px;height:51.600px"><div class="mph" style="height:12px"></div></div>
  <svg style="left:1131.600px;top:183.200px" width="8" height="5" viewBox="0 0 8 5"><path d="M0 -.2 L3.600 2.500 L0 5.200 L.8 2.500 Z M3.800 -.2 L7.500 2.500 L3.800 5.200 L4.600 2.500 Z" fill="#f0f0f0" stroke="#f0f0f0" stroke-width=".5" stroke-linejoin="round"/></svg>
  <svg style="left:1148.600px;top:182.700px" width="7" height="7" viewBox="0 0 7 7"><path d="M.9 .9 L5.600 5.600 M5.600 .9 L.9 5.600" stroke="#e4e4e4" stroke-width="1.900"/></svg>
  <div class="grip" style="left:1132.600px;top:194px;width:18.400px;height:3.800px"></div>
  <svg style="left:1130px;top:202px" width="24" height="22" viewBox="1130 202 24 22"><g fill="#535353" stroke="#d2d2d2" stroke-width="1.300"><rect x="1134.400" y="205" width="8.900" height="12.200" rx=".8"/><rect x="1137.800" y="211.600" width="12.600" height="8.900" rx=".8"/></g></svg>
  <!-- P3 -->
  <div class="mp" style="left:1165.700px;top:290px;width:36.200px;height:77.400px"><div class="mph" style="height:12.400px"></div></div>
  <svg style="left:1173.600px;top:295px" width="8" height="5" viewBox="0 0 8 5"><path d="M0 -.2 L3.600 2.500 L0 5.200 L.8 2.500 Z M3.800 -.2 L7.500 2.500 L3.800 5.200 L4.600 2.500 Z" fill="#f0f0f0" stroke="#f0f0f0" stroke-width=".5" stroke-linejoin="round"/></svg>
  <svg style="left:1190.600px;top:294.400px" width="7" height="7" viewBox="0 0 7 7"><path d="M.9 .9 L5.600 5.600 M5.600 .9 L.9 5.600" stroke="#e4e4e4" stroke-width="1.900"/></svg>
  <div class="grip" style="left:1175px;top:306.400px;width:18.200px"></div>
  <svg style="left:1172px;top:314px" width="26" height="48" viewBox="1172 314 26 48">
    <defs><linearGradient id="gP3" x1="0" y1="0" x2="1" y2="1"><stop offset="0" stop-color="#c4c4c4"/><stop offset="1" stop-color="#6e6e6e"/></linearGradient></defs>
    <path d="M1185.600 317.600 C1190.800 317.300 1194.200 320.500 1193.900 324.600 C1193.600 328.400 1189.800 330.900 1184.600 330.800 C1179.400 330.700 1175.600 328.400 1175.800 325.200 C1176 322.800 1178.600 322.600 1180.400 322 C1182.400 321.300 1181.800 319.600 1183 318.600 C1183.700 318 1184.600 317.700 1185.600 317.600 Z" fill="#d6d6d6"/>
    <g fill="#535353"><circle cx="1179.600" cy="326.300" r="1.300"/><circle cx="1183.400" cy="328.200" r="1.300"/><circle cx="1187.400" cy="328" r="1.300"/><circle cx="1190.400" cy="325.600" r="1.300"/><circle cx="1190.800" cy="321.800" r="1.200"/><circle cx="1187.600" cy="320" r="1.100"/></g>
    <path d="M1177.800 343.600 A14.600 14.200 0 0 1 1192.600 357.800 H1177.800 Z" fill="url(#gP3)" stroke="#dcdcdc" stroke-width="1.200"/>
  </svg>
  <!-- P4 layers -->
  <div class="mp" style="left:1197px;top:421.500px;width:35.300px;height:50.600px"><div class="mph" style="height:12.200px"></div></div>
  <svg style="left:1204.500px;top:426.100px" width="8" height="5" viewBox="0 0 8 5"><path d="M0 -.2 L3.600 2.500 L0 5.200 L.8 2.500 Z M3.800 -.2 L7.500 2.500 L3.800 5.200 L4.600 2.500 Z" fill="#f0f0f0" stroke="#f0f0f0" stroke-width=".5" stroke-linejoin="round"/></svg>
  <svg style="left:1221.300px;top:425.500px" width="7" height="7" viewBox="0 0 7 7"><path d="M.9 .9 L5.600 5.600 M5.600 .9 L.9 5.600" stroke="#e4e4e4" stroke-width="1.900"/></svg>
  <div class="grip" style="left:1206px;top:437.400px;width:18px"></div>
  <svg style="left:1205px;top:446px" width="22" height="20" viewBox="1205 446 22 20"><g fill="#ececec"><path d="M1215.800 447.700 L1224.300 452.700 L1215.800 457.700 L1207.300 452.700 Z"/><path d="M1209.600 456.400 L1215.800 460 L1222 456.400 L1224.300 457.800 L1215.800 464.300 L1207.300 457.800 Z"/></g></svg>
  <!-- P5 -->
  <div class="mp" style="left:1136.600px;top:485.400px;width:36.200px;height:84px"><div class="mph" style="height:12.300px"></div></div>
  <svg style="left:1144.500px;top:489.800px" width="8" height="5" viewBox="0 0 8 5"><path d="M0 -.2 L3.600 2.500 L0 5.200 L.8 2.500 Z M3.800 -.2 L7.500 2.500 L3.800 5.200 L4.600 2.500 Z" fill="#f0f0f0" stroke="#f0f0f0" stroke-width=".5" stroke-linejoin="round"/></svg>
  <svg style="left:1161.700px;top:489.200px" width="7" height="7" viewBox="0 0 7 7"><path d="M.9 .9 L5.600 5.600 M5.600 .9 L.9 5.600" stroke="#e4e4e4" stroke-width="1.900"/></svg>
  <div class="grip" style="left:1146px;top:501px;width:18px"></div>
  <svg style="left:1145px;top:512px" width="22" height="46" viewBox="1145 512 22 46">
    <rect x="1147.600" y="514.600" width="15.600" height="10.500" fill="#d8d8d8"/>
    <g><rect x="1148.800" y="515.800" width="3.800" height="3.600" fill="#8e8e8e"/><rect x="1153.600" y="515.800" width="3.600" height="3.600" fill="#d8d8d8"/><rect x="1158.200" y="515.800" width="3.800" height="3.600" fill="#6a6a6a"/><rect x="1148.800" y="520.400" width="3.800" height="3.600" fill="#5e5e5e"/><rect x="1153.600" y="520.400" width="3.600" height="3.600" fill="#9a9a9a"/><rect x="1158.200" y="520.400" width="3.800" height="3.600" fill="#b6b6b6"/></g>
    <g fill="#dedede"><path d="M1151.600 546.200 H1159.200 L1158.700 555.300 H1152.100 Z"/><path d="M1153.400 546 L1150.600 541.600 C1149.600 540 1151 538.600 1152.200 540 L1155 545.600 Z"/><path d="M1154.800 545.400 L1153.600 538 L1154.800 536 L1156 538 L1156.400 545.400 Z"/><path d="M1157 545.600 L1158.400 541.200 C1158 539.200 1160.200 537.400 1162 538.200 C1163.600 539 1164 540.600 1163.200 541.800 C1161.600 541.200 1160.400 541.800 1159.600 543 L1158.600 546 Z"/></g>
  </svg>
  <!-- P6 -->
  <div class="mp" style="left:1120.200px;top:561.300px;width:104.500px;height:103px;border-radius:4px 4px 1px 1px"><div class="mph" style="height:12.200px;border-radius:3px 3px 0 0"></div></div>
  <svg style="left:1195.200px;top:566px" width="8" height="5" viewBox="0 0 8 5"><path d="M0 -.2 L3.600 2.500 L0 5.200 L.8 2.500 Z M3.800 -.2 L7.500 2.500 L3.800 5.200 L4.600 2.500 Z" fill="#f0f0f0" stroke="#f0f0f0" stroke-width=".5" stroke-linejoin="round"/></svg>
  <svg style="left:1212.600px;top:565.200px" width="7" height="7" viewBox="0 0 7 7"><path d="M.9 .9 L5.600 5.600 M5.600 .9 L.9 5.600" stroke="#e4e4e4" stroke-width="1.900"/></svg>
  <div class="grip" style="left:1162.800px;top:576.800px;width:19px"></div>
  <svg style="left:1128px;top:586px" width="22" height="72" viewBox="1128 586 22 72">
    <g fill="#dedede">
      <rect x="1131.500" y="588.800" width="3" height="3"/><rect x="1143.300" y="588.800" width="3" height="3"/><rect x="1131.500" y="600.300" width="3" height="3"/><rect x="1143.300" y="600.300" width="3" height="3"/>
      <rect x="1138.200" y="595.300" width="1.500" height="1.500"/>
    </g>
    <rect x="1133" y="590.300" width="11.800" height="11.500" fill="none" stroke="#dedede" stroke-width="1.200" stroke-dasharray="1.500 1.300"/>
    <g fill="#dedede"><rect x="1131.400" y="613.600" width="1.200" height="17.400"/><rect x="1134.300" y="616" width="7" height="5.600"/><rect x="1134.300" y="623" width="12" height="5.200"/></g>
    <g><rect x="1132" y="641.800" width="6.600" height="6.400" fill="#dedede"/><rect x="1135.400" y="645.200" width="6.800" height="6.600" fill="#535353" stroke="#dedede" stroke-width="1.100"/><rect x="1139.600" y="649.200" width="6.600" height="6.400" fill="#dedede"/></g>
  </svg>
  <div class="t" style="left:1155.7px;top:591.57px;font-size:10.2px;color:#f2f2f2;transform:scaleX(0.8915);font-weight:bold">Transformar</div>
  <div class="t" style="left:1155.7px;top:617.77px;font-size:10.2px;color:#f2f2f2;transform:scaleX(0.8742);font-weight:bold">Alinear</div>
  <div class="t" style="left:1155.7px;top:644.07px;font-size:10.2px;color:#f2f2f2;transform:scaleX(0.8351);font-weight:bold">Buscatrazos</div>

  <!-- annotations -->
  <svg class="a" style="left:0;top:0" width="1280" height="682" viewBox="0 0 1280 682">
    <line x1="33.4" y1="325" x2="144.4" y2="169.6" stroke="#ee0f17" stroke-width="3.4"/>
    <polygon points="150,161.6 138.7,168.7 147.6,174.6" fill="#ee0f17"/>
    <rect x="7.3" y="325.8" width="28.1" height="26.4" fill="none" stroke="#e3131b" stroke-width="3.1"/>
  </svg>
</div>
</body>
</html>
